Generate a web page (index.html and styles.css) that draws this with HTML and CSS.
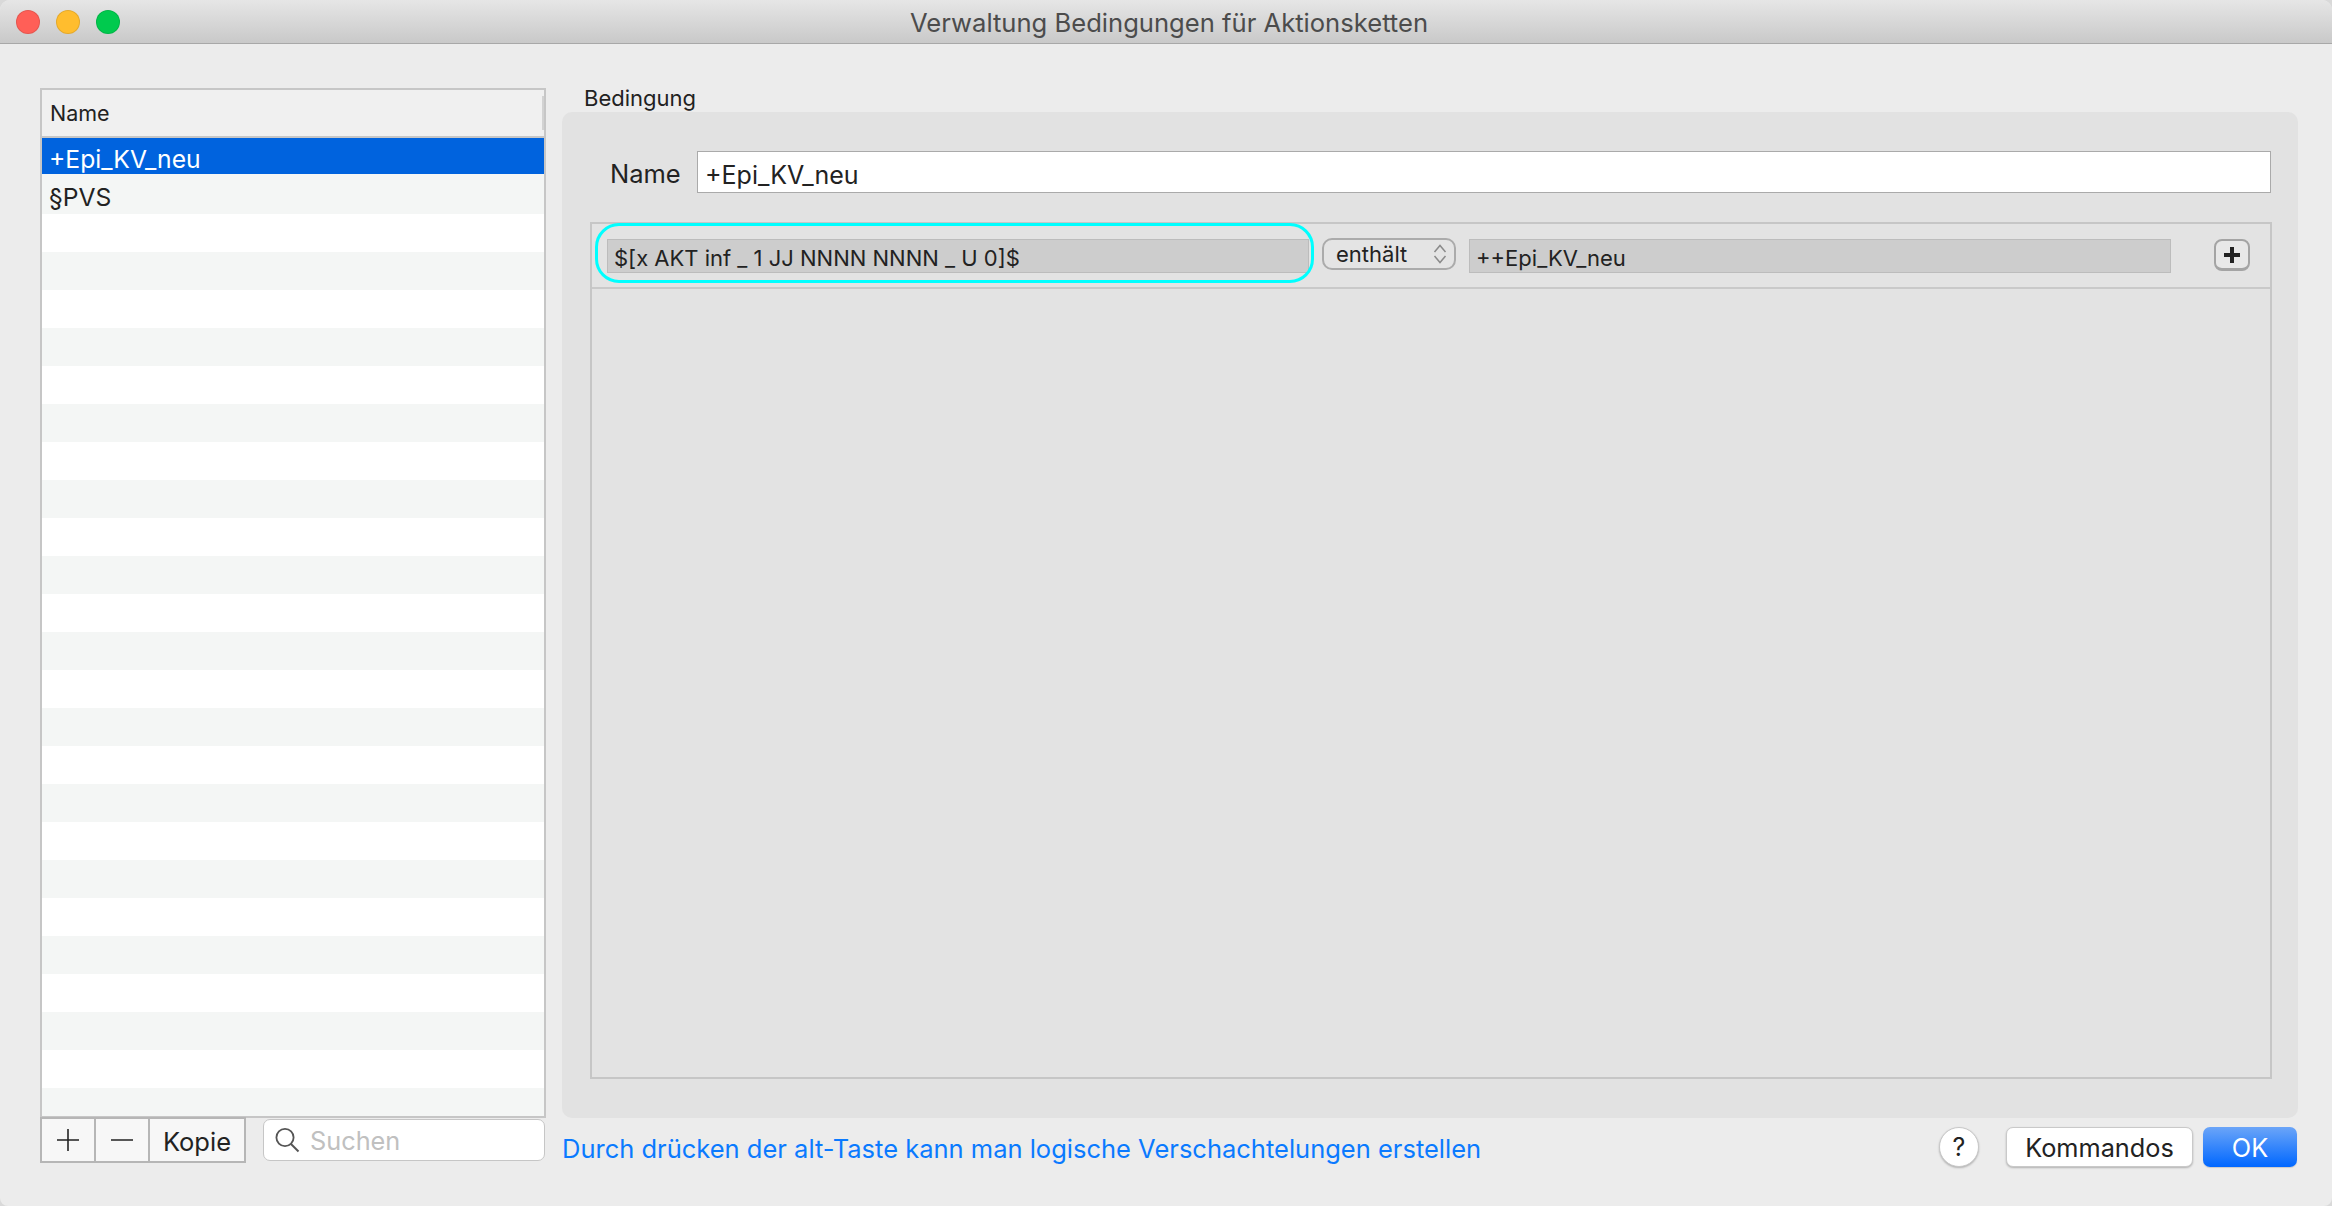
FILE: index.html
```html
<!DOCTYPE html>
<html lang="de">
<head>
<meta charset="utf-8">
<title>Verwaltung Bedingungen für Aktionsketten</title>
<link rel="stylesheet" href="styles.css">
</head>
<body>
<div class="window">
  <header class="titlebar">
    <div class="lights">
      <span class="light red"></span>
      <span class="light yellow"></span>
      <span class="light green"></span>
    </div>
    <div class="title">Verwaltung Bedingungen für Aktionsketten</div>
  </header>
  <main class="content">
    <section class="list-col">
      <div class="list">
        <div class="list-head"><span>Name</span><i class="head-sep"></i></div>
        <div class="row selected"><span>+Epi_KV_neu</span></div>
        <div class="row second"><span>§PVS</span></div>
        <div class="row"></div><div class="row"></div><div class="row"></div><div class="row"></div>
        <div class="row"></div><div class="row"></div><div class="row"></div><div class="row"></div>
        <div class="row"></div><div class="row"></div><div class="row"></div><div class="row"></div>
        <div class="row"></div><div class="row"></div><div class="row"></div><div class="row"></div>
        <div class="row"></div><div class="row"></div><div class="row"></div><div class="row"></div>
        <div class="row"></div><div class="row"></div><div class="row"></div><div class="row"></div>
      </div>
    </section>
    <section class="detail-col">
      <div class="legend">Bedingung</div>
      <div class="panel">
        <div class="name-row">
          <label class="name-label">Name</label>
          <div class="name-field">+Epi_KV_neu</div>
        </div>
        <div class="rule-box">
          <div class="rule-row">
            <div class="cell cell-left">$[x AKT inf _ 1 JJ NNNN NNNN _ U 0]$</div>
            <div class="select">
              <span>enthält</span>
              <svg class="updown" viewBox="0 0 14 20" width="14" height="20"><path d="M1.5 8 7 1.5 12.5 8M1.5 12 7 18.5 12.5 12" fill="none" stroke="#8a8a8a" stroke-width="1.5"/></svg>
            </div>
            <div class="cell cell-right">++Epi_KV_neu</div>
            <div class="add-btn"><svg viewBox="0 0 16 16" width="16" height="16"><path d="M8 0v16M0 8h16" stroke="#222" stroke-width="4"/></svg></div>
            <div class="cyan-ring"></div>
          </div>
        </div>
      </div>
    </section>
    <div class="toolbar">
      <div class="segments">
        <div class="seg seg-icon"><svg viewBox="0 0 22 22" width="22" height="22"><path d="M11 0v22M0 11h22" stroke="#222" stroke-width="1.6"/></svg></div>
        <div class="seg seg-icon"><svg viewBox="0 0 22 22" width="22" height="22"><path d="M0 11h22" stroke="#222" stroke-width="1.6"/></svg></div>
        <div class="seg seg-text">Kopie</div>
      </div>
      <div class="search">
        <svg viewBox="0 0 26 26" width="26" height="26"><circle cx="11" cy="10.5" r="8.6" fill="none" stroke="#555" stroke-width="1.8"/><path d="M17 17l7.5 7.5" stroke="#555" stroke-width="2"/></svg>
        <span>Suchen</span>
      </div>
    </div>
    <footer class="actions">
      <a class="hint">Durch drücken der alt-Taste kann man logische Verschachtelungen erstellen</a>
      <div class="buttons">
        <div class="help">?</div>
        <div class="btn">Kommandos</div>
        <div class="btn primary">OK</div>
      </div>
    </footer>
  </main>
</div>
</body>
</html>
```
FILE: styles.css
```css
* { box-sizing: border-box; }
html, body { margin: 0; height: 100%; }
body { background: #d9d9d9; font-family: Inter, "Liberation Sans", Arial, sans-serif; color: #222; overflow: hidden; }
.window { width: 2332px; height: 1206px; background: #ececec; border-radius: 10px 10px 8px 8px; overflow: hidden; display: flex; flex-direction: column; }

.titlebar { height: 44px; flex: none; position: relative; display: flex; align-items: center; justify-content: center; background: linear-gradient(#e6e6e6, #c9c9c9); border-bottom: 1px solid #a8a8a8; }
.lights { position: absolute; left: 16px; top: 10px; display: flex; gap: 16px; }
.light { width: 24px; height: 24px; border-radius: 50%; border: 1px solid rgba(0,0,0,.1); }
.red { background: #ff5f57; }
.yellow { background: #ffbd2e; }
.green { background: #00ca4e; }
.title { font-size: 25.6px; color: #4c4c4c; padding: 2px 0 0 6px; }

.content { flex: 1; display: grid; grid-template-columns: 506px 1736px; grid-template-rows: 1074px 1fr; column-gap: 16px; padding-left: 40px; }

.list-col { padding-top: 44px; min-height: 0; }
.list { height: 1030px; border: 2px solid #c6c6c6; background: #fff; overflow: hidden; }
.list-head { height: 48px; background: #f0f0f0; border-bottom: 2px solid #c6c6c6; display: flex; align-items: center; justify-content: space-between; padding: 0 0 0 8px; font-size: 21.5px; }
.head-sep { width: 2px; height: 34px; background: #d2d2d2; }
.row { height: 38px; display: flex; align-items: center; padding: 5px 0 0 7px; font-size: 24.7px; background: #fff; }
.row:nth-child(2n+1) { background: #f4f6f5; }
.row.selected { height: 36px; background: #0063de; color: #fff; }
.row.second { height: 40px; background: #f4f6f5; }

.detail-col { display: flex; flex-direction: column; min-height: 0; padding-top: 41px; }
.legend { height: 27px; flex: none; padding-left: 22px; font-size: 22px; line-height: 27px; }
.panel { flex: 1; background: #e2e2e2; border-radius: 10px; padding: 39px 26px 39px 28px; display: flex; flex-direction: column; }
.name-row { display: flex; align-items: center; height: 42px; flex: none; }
.name-label { width: 107px; padding-left: 20px; padding-top: 2px; font-size: 25.5px; }
.name-field { width: 1574px; height: 42px; background: #fff; border: 1px solid #aaa; padding: 5px 0 0 7px; font-size: 25px; line-height: 36px; }
.rule-box { flex: 1; margin-top: 29px; border: 2px solid #c6c6c6; background: #e3e3e3; }
.rule-row { position: relative; height: 65px; border-bottom: 2px solid #c9c9c9; display: flex; align-items: flex-start; padding: 15px 0 0 15px; }
.cell { height: 34px; background: #cdcdcd; border: 1px solid #bcbcbc; font-size: 22px; line-height: 37px; padding-left: 6px; }
.cell-left { width: 702px; margin-right: 13px; }
.cell-right { width: 702px; margin-left: 13px; margin-right: 43px; }
.select { width: 134px; height: 32px; margin-top: -1px; border: 2px solid #ababab; border-radius: 10px; background: #e4e4e4; display: flex; align-items: center; justify-content: space-between; padding: 0 7px 0 12px; font-size: 22px; }
.updown { flex: none; }
.add-btn { width: 36px; height: 32px; border: 2px solid #a4a4a4; border-bottom-width: 3px; border-radius: 8px; display: flex; align-items: center; justify-content: center; background: #e8e8e8; }
.cyan-ring { position: absolute; left: 3px; top: -1px; width: 719px; height: 60px; border: 3px solid #0ff; border-radius: 24px; }

.toolbar { display: flex; align-items: flex-start; margin-top: -1px; }
.segments { display: flex; height: 46px; border: 2px solid #b6b6b6; background: #f7f7f7; }
.seg { display: flex; align-items: center; justify-content: center; height: 100%; }
.seg-icon { width: 54px; border-right: 2px solid #b6b6b6; }
.seg-text { width: 94px; font-size: 25.5px; padding-top: 2px; }
.search { margin-left: 17px; margin-top: 2px; width: 282px; height: 42px; border: 1px solid #c6c6c6; border-radius: 7px; background: #fff; display: flex; align-items: center; padding-left: 10px; gap: 10px; font-size: 25.3px; color: #c0c0c0; }

.actions { display: flex; justify-content: space-between; align-items: center; height: 58px; }
.hint { font-size: 25.5px; color: #0a7aff; padding-top: 2px; }
.buttons { display: flex; align-items: center; gap: 10px; padding-right: 1px; }
.help { width: 40px; height: 40px; margin-right: 17px; border-radius: 50%; background: #fff; border: 1px solid #c8c8c8; box-shadow: 0 1px 2px rgba(0,0,0,.25); display: flex; align-items: center; justify-content: center; font-size: 25px; }
.btn { height: 40px; display: flex; align-items: center; justify-content: center; width: 187px; border-radius: 7px; background: #fff; border: 1px solid #c9c9c9; box-shadow: 0 1px 2px rgba(0,0,0,.25); font-size: 25.3px; }
.btn.primary { width: 94px; color: #fff; border: 0; background: linear-gradient(#6ba5f8, #0067ff); box-shadow: 0 1px 1px rgba(0,0,0,.15); }
```
